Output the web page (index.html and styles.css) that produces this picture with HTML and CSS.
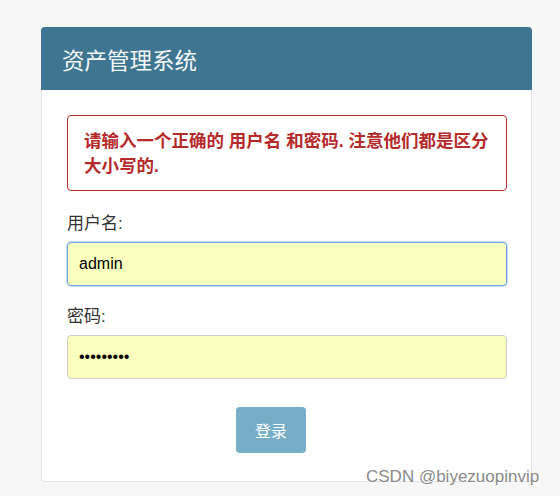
FILE: index.html
```html
<!DOCTYPE html>
<html lang="zh-CN">
<head>
<meta charset="utf-8">
<title>资产管理系统</title>
<link rel="stylesheet" href="styles.css">
</head>
<body>
<div class="page">
  <div class="card">
    <div class="card-header">资产管理系统</div>
    <div class="card-body">
      <div class="alert">请输入一个正确的 用户名 和密码. 注意他们都是区分大小写的.</div>
      <form class="login-form">
        <label class="field-label" for="username">用户名:</label>
        <input class="field-input focused" id="username" type="text" value="admin">
        <label class="field-label" for="password">密码:</label>
        <input class="field-input" id="password" type="password" value="123456789">
        <div class="form-actions">
          <button class="btn-login" type="button">登录</button>
        </div>
      </form>
    </div>
  </div>
  <div class="watermark">CSDN @biyezuopinvip</div>
</div>
</body>
</html>
```
FILE: styles.css
```css
html, body {
  margin: 0;
  padding: 0;
  background: #f7f7f7;
  font-family: "Liberation Sans", "Noto Sans CJK SC", sans-serif;
  color: #333;
}

.page {
  position: relative;
  width: 560px;
  height: 496px;
  overflow: hidden;
  padding-top: 27px;
  box-sizing: border-box;
}

.card {
  margin-left: 41px;
  width: 491px;
  box-sizing: border-box;
  background: #fff;
  border: 1px solid #e3e3e3;
  border-top: none;
  border-radius: 4px;
}

.card-header {
  height: 63px;
  background: #3e7590;
  color: #f4f8fa;
  font-size: 22.5px;
  display: flex;
  align-items: center;
  padding-left: 21px;
  border-radius: 4px 4px 0 0;
  margin: 0 -1px;
}

.card-body {
  padding: 25px 24px 28px 25px;
}

.alert {
  border: 1px solid #b52a2a;
  border-radius: 4px;
  padding: 13px 16px 11px;
  color: #b52a2a;
  font-weight: bold;
  font-size: 17.5px;
  line-height: 25px;
}

.login-form {
  display: flex;
  flex-direction: column;
}

.field-label {
  font-size: 17px;
  line-height: 22px;
  color: #333;
  margin-top: 22px;
  margin-bottom: 7px;
}

.login-form .field-label + .field-input + .field-label {
  margin-top: 20px;
}

.field-input {
  height: 44px;
  box-sizing: border-box;
  border: 1px solid #cccccc;
  border-radius: 4px;
  background: #faffbd;
  font-family: "Liberation Sans", sans-serif;
  font-size: 16px;
  color: #000;
  padding: 0 11px;
  outline: none;
}

.field-input.focused {
  border-color: #6d9fe6;
  box-shadow: 0 0 0 1px rgba(109, 159, 230, 0.35);
}

.form-actions {
  display: flex;
  padding-left: 169px;
  margin-top: 28px;
}

.btn-login {
  width: 70px;
  height: 46px;
  border: none;
  border-radius: 4px;
  background: #77aec7;
  color: #fff;
  font-family: "Liberation Sans", "Noto Sans CJK SC", sans-serif;
  font-size: 16px;
  cursor: pointer;
}

.watermark {
  position: absolute;
  left: 366px;
  top: 466px;
  font-size: 17px;
  line-height: 22px;
  color: #8a8a8a;
  text-shadow: 0 0 1px #fff;
  white-space: nowrap;
}
```
